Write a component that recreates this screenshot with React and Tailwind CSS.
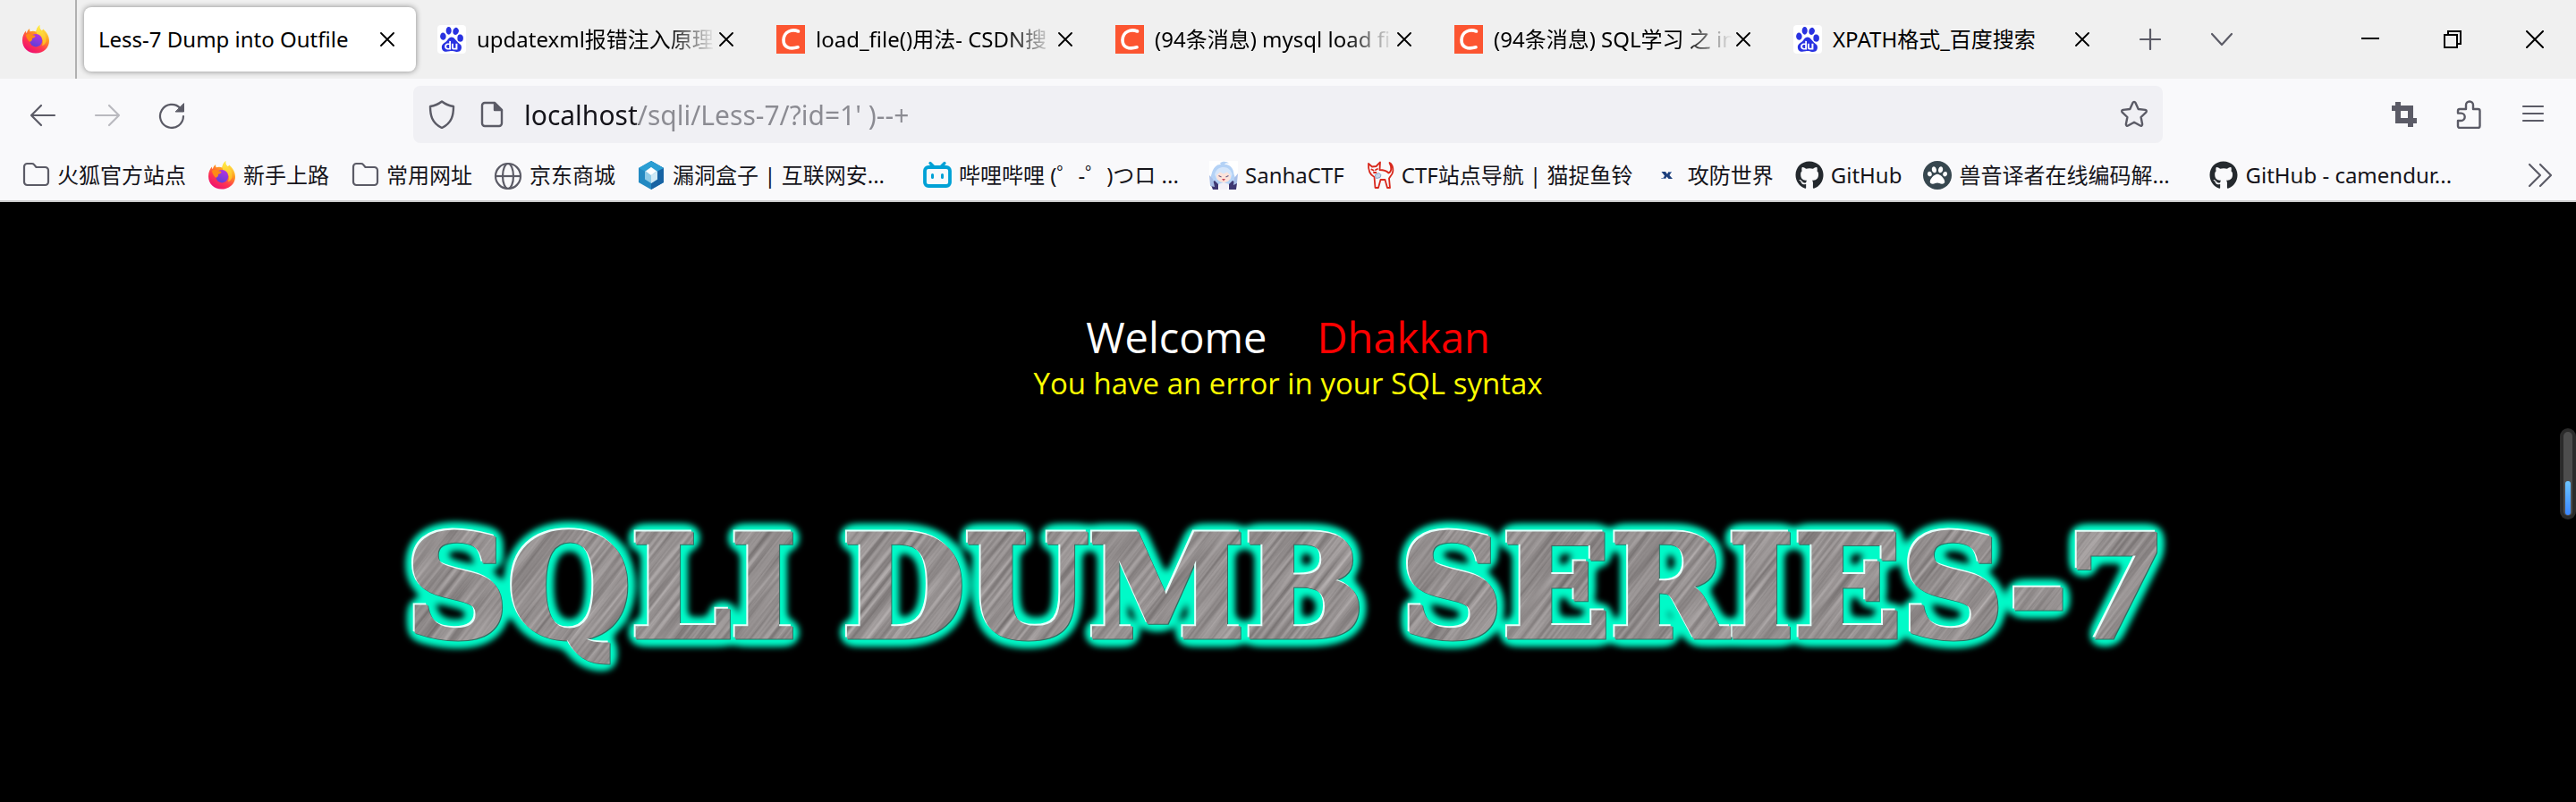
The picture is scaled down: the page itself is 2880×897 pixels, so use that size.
import React from "react";
import { FaGithub, FaPaw } from "react-icons/fa";
import { SiBaidu } from "react-icons/si";

function FirefoxIcon() {
  return (
    <svg viewBox="0 0 32 32" className="size-8" aria-hidden="true">
      <defs>
        <linearGradient id="fx-body" x1="0.8" y1="0" x2="0.2" y2="1">
          <stop offset="0.05" stopColor="#fff44f" />
          <stop offset="0.35" stopColor="#ff9a1f" />
          <stop offset="0.65" stopColor="#ff3750" />
          <stop offset="1" stopColor="#eb0878" />
        </linearGradient>
        <linearGradient id="fx-globe" x1="0.7" y1="0" x2="0.3" y2="1">
          <stop offset="0" stopColor="#b833e1" />
          <stop offset="1" stopColor="#5b3fd6" />
        </linearGradient>
        <linearGradient id="fx-flame" x1="0.5" y1="0" x2="0.5" y2="1">
          <stop offset="0" stopColor="#fff04a" />
          <stop offset="1" stopColor="#ffb21f" />
        </linearGradient>
      </defs>
      <path d="M20.5 0c-.8 3 .2 4.500 2.200 6.200 0 0 1-.3 1.600-1.700 3.500 2.800 6.700 7.500 6.700 13C31 25.500 24.600 31.500 16 31.500S1 25.500 1 17.200c0-4.700 1.800-8.500 3.900-10.700 0 1 .3 2 .9 2.700.7-3 2.200-4.600 3.400-5.200-.3 1.300 0 2.500.6 3.300 2-.7 4.500-.8 6.600.2C16.800 4.500 18 1.500 20.500 0z" fill="url(#fx-body)" />
      <path d="M20.500 0c-.8 3 .2 4.500 2.200 6.200 3.500 3 5.500 7 4.800 12.300-1 3-3.500 4.500-4.500 4.500 2.500-6-.5-11-5.500-12.500l-1.100-3C16.800 4.500 18 1.500 20.500 0z" fill="url(#fx-flame)" />
      <ellipse cx="16.200" cy="17.200" rx="7" ry="7.200" fill="url(#fx-globe)" />
      <path d="M4.900 11c2.600-1.600 5.200-1.500 7 .2 1.400 0 3 .2 3.700 1-.4 1.500-1.800 2.300-3.600 2.600.6 1.800-.8 3.400-2.800 4C7.500 17.500 5.500 14.500 4.900 11z" fill="#ff8a16" />
    </svg>
  );
}

function BaiduIcon() {
  return (
    <span className="flex size-8 items-center justify-center rounded-sm bg-white">
      <SiBaidu className="size-7 text-[#2932e1]" aria-hidden="true" />
    </span>
  );
}

function CsdnIcon() {
  return (
    <svg viewBox="0 0 32 32" className="size-8" aria-hidden="true">
      <rect width="32" height="32" fill="#fc5531" />
      <path d="M24.500 7C17 4 8.500 7.500 8 16.500c-.3 8.500 7 11 16 8.300" fill="none" stroke="#fff" strokeWidth="3.600" strokeLinecap="round" />
    </svg>
  );
}

function FolderIcon() {
  return (
    <svg viewBox="0 0 32 32" className="size-8 text-[#5b5b66]" fill="none" stroke="currentColor" strokeWidth="2.200" strokeLinejoin="round" aria-hidden="true">
      <path d="M3 6.500A3.500 3.500 0 0 1 6.500 3h5.200c1 0 1.800.4 2.400 1.100L16.500 7h10A3.500 3.500 0 0 1 30 10.500v13a3.500 3.500 0 0 1-3.500 3.500h-20A3.500 3.500 0 0 1 3 23.500z" />
    </svg>
  );
}

function GlobeIcon() {
  return (
    <svg viewBox="0 0 32 32" className="size-8 text-[#5b5b66]" fill="none" stroke="currentColor" strokeWidth="2.200" aria-hidden="true">
      <circle cx="16" cy="17" r="14" />
      <ellipse cx="16" cy="17" rx="6" ry="14" />
      <path d="M2 17h28" />
    </svg>
  );
}

function HexIcon() {
  return (
    <svg viewBox="0 0 32 32" className="size-8" aria-hidden="true">
      <path d="M16 0l14 8v16l-14 8L2 24V8z" fill="#2289c2" />
      <path d="M16 0l14 8v16l-14 8z" fill="#1763a3" />
      <path d="M16 0l14 8-7 3.500-7-4-7 4L2 8z" fill="#2b9fd4" />
      <path d="M16 7l7 4.500v9L16 25l-7-4.500v-9z" fill="#8fcbe8" />
      <path d="M16 7l6 4.500L16 16l-6-4.500z" fill="#fff" />
      <path d="M16 16l7-4.500v9L16 25z" fill="#cfe9f5" />
    </svg>
  );
}

function BilibiliIcon() {
  return (
    <svg viewBox="0 0 32 32" className="size-8" fill="none" stroke="#00a1d6" strokeLinecap="round" aria-hidden="true">
      <path d="M8 2.500l4 4M24 2.500l-4 4" strokeWidth="3.200" />
      <rect x="2" y="7" width="28" height="21" rx="4" strokeWidth="3.800" />
      <path d="M10.500 15.500v3M21.500 15.500v3" strokeWidth="3" />
    </svg>
  );
}

function AnimeIcon() {
  return (
    <svg viewBox="0 0 32 32" className="size-8" aria-hidden="true">
      <rect width="32" height="32" fill="#fff" />
      <path d="M12 2.500c2-2.500 8-2.500 10 .5-2-.8-4-.6-5 .8 7 .5 10 5 10.500 11l2.500 7-2.500 5H4L1 20l2-7C5 7 8.500 3.500 13 4z" fill="#b4d2f6" />
      <path d="M6 15c2-6 5-8 10-8s8 3 9.500 8l-2 6h-15z" fill="#d5e6fb" />
      <path d="M8 16l4-3.500 4 2 4-2 4 4c0 5-3.500 7.500-8 7.500s-8-3-8-8z" fill="#fde3da" />
      <path d="M10.500 16.500l3 1.500M21.500 16.500l-3 1.500" stroke="#6a5f8a" strokeWidth="1.200" />
      <path d="M14 20h4l-2 2.500z" fill="#c9485c" />
      <path d="M1 25l5-3 4 4v6H4zM31 25l-5-3-4 4v6h8z" fill="#3f3873" />
      <path d="M10 26l6-2 6 2-2 6h-8z" fill="#f3f0f7" />
      <path d="M0 16l4 4 2 9-5-1zM32 14l-4 5-1 8 4-2z" fill="#a9bfe8" />
    </svg>
  );
}

function CatIcon() {
  return (
    <svg viewBox="0 0 32 32" className="size-8" fill="none" stroke="#d8281c" strokeWidth="1.800" strokeLinejoin="round" strokeLinecap="round" aria-hidden="true">
      <path d="M3 3l4 3.500L11.500 6 16 1.500 15.500 10c5.500 0 8 1.500 10 3.500 3-1 4-6 1-11.500 4 2 5.500 10 1.500 14.500L26 19.500 27 30h-3l-2.500-9h-5L14 30h-3.500L9.500 18C4.500 15.500 2.500 11 3 3z" />
      <path d="M6.500 9.500l2 1M13 9l-2 1M9 13h2.500" />
      <path d="M10.500 15.500l4-2 2.500 2-1 3-4 1z" fill="#c6d6ea" stroke="#8ba6c9" strokeWidth="1" />
    </svg>
  );
}

function XctfIcon() {
  return (
    <svg viewBox="0 0 32 32" className="size-8" aria-hidden="true">
      <path d="M10.500 12h4.500l2 2.800 1.500-2.800H22l-2.500 4 3.500 4h-4.500l-2-2.500-1.500 2.500H10l3-1.500 1-2z" fill="#1c3f7c" />
      <path d="M10.500 19.500h4M18 12.500h4" stroke="#6f8bb8" strokeWidth="1" />
    </svg>
  );
}

function PawIcon() {
  return (
    <span className="flex size-8 items-center justify-center rounded-full bg-[#37474f]">
      <FaPaw className="size-[22px] text-white" aria-hidden="true" />
    </span>
  );
}

function GithubIcon() {
  return <FaGithub className="size-8 text-[#24292e]" aria-hidden="true" />;
}

function CloseIcon() {
  return (
    <svg viewBox="0 0 16 16" className="size-4" fill="none" stroke="currentColor" strokeWidth="1.800" strokeLinecap="round" aria-hidden="true">
      <path d="M1 1l14 14M15 1L1 15" />
    </svg>
  );
}

const tabs = [
  { title: "Less-7 Dump into Outfile", active: true },
  { title: "updatexml报错注入原理", icon: <BaiduIcon />, fade: true },
  { title: "load_file()用法- CSDN搜", icon: <CsdnIcon />, fade: true },
  { title: "(94条消息) mysql load fi", icon: <CsdnIcon />, fade: true },
  { title: "(94条消息) SQL学习 之 in", icon: <CsdnIcon />, fade: true },
  { title: "XPATH格式_百度搜索", icon: <BaiduIcon /> },
];

const bookmarks = [
  { title: "火狐官方站点", icon: <FolderIcon /> },
  { title: "新手上路", icon: <FirefoxIcon /> },
  { title: "常用网址", icon: <FolderIcon /> },
  { title: "京东商城", icon: <GlobeIcon /> },
  { title: "漏洞盒子 | 互联网安...", icon: <HexIcon />, long: true },
  { title: "哔哩哔哩 (゜-゜)つロ ...", icon: <BilibiliIcon />, long: true },
  { title: "SanhaCTF", icon: <AnimeIcon /> },
  { title: "CTF站点导航 | 猫捉鱼铃", icon: <CatIcon />, long: true },
  { title: "攻防世界", icon: <XctfIcon /> },
  { title: "GitHub", icon: <GithubIcon /> },
  { title: "兽音译者在线编码解...", icon: <PawIcon />, long: true },
  { title: "GitHub - camendur...", icon: <GithubIcon />, long: true },
];

function Tab({ title, icon, active, fade }) {
  return (
    <div className="w-[379px] px-1 py-2">
      <div
        className={
          active
            ? "flex h-full items-center rounded-lg bg-white pl-4 pr-6 shadow-[0_0_6px_rgba(0,0,0,0.45)]"
            : "flex h-full items-center rounded-lg pl-4 pr-6"
        }
      >
        {icon && <span className="mr-3 shrink-0">{icon}</span>}
        <a
          href="#page"
          role="tab"
          aria-selected={Boolean(active)}
          className={
            fade
              ? "min-w-0 flex-1 whitespace-nowrap mask-r-from-80% mask-r-to-100%"
              : "min-w-0 flex-1 whitespace-nowrap"
          }
        >
          {title}
        </a>
        <button type="button" aria-label="Close tab" className="ml-1 flex h-8 w-4 shrink-0 items-center justify-center">
          <CloseIcon />
        </button>
      </div>
    </div>
  );
}

function TabBar() {
  return (
    <header className="flex h-[88px] items-stretch bg-[#f0f0f0] text-2xl text-black">
      <div className="flex w-[86px] items-center border-r-2 border-[#b0b0b0] pl-6">
        <FirefoxIcon />
      </div>
      <div role="tablist" className="ml-1 flex">
        {tabs.map((t) => (
          <Tab key={t.title} {...t} />
        ))}
      </div>
      <div className="flex items-center gap-10 pl-5 text-[#5b5b66]">
        <button type="button" aria-label="New tab" className="flex size-10 items-center justify-center">
          <svg viewBox="0 0 24 24" className="size-6" stroke="currentColor" strokeWidth="2.200" strokeLinecap="round">
            <path d="M12 1v22M1 12h22" />
          </svg>
        </button>
        <button type="button" aria-label="List all tabs" className="flex size-10 items-center justify-center">
          <svg viewBox="0 0 24 24" className="size-6" fill="none" stroke="currentColor" strokeWidth="2.200" strokeLinecap="round" strokeLinejoin="round">
            <path d="M1 6l11 12L23 6" />
          </svg>
        </button>
      </div>
      <div className="ml-auto flex items-center">
        <button type="button" aria-label="Minimize" className="flex w-[92px] items-center justify-center">
          <svg viewBox="0 0 20 20" className="size-5" stroke="currentColor" strokeWidth="2">
            <path d="M0 9h20" />
          </svg>
        </button>
        <button type="button" aria-label="Restore" className="flex w-[92px] items-center justify-center">
          <svg viewBox="0 0 20 20" className="size-5" fill="none" stroke="currentColor" strokeWidth="2">
            <path d="M1 5h14v14H1zM5 5V1h14v14h-4" />
          </svg>
        </button>
        <button type="button" aria-label="Close" className="flex w-[92px] items-center justify-center">
          <svg viewBox="0 0 20 20" className="size-5" stroke="currentColor" strokeWidth="2" strokeLinecap="round">
            <path d="M1 1l18 18M19 1L1 19" />
          </svg>
        </button>
      </div>
    </header>
  );
}

function NavBar() {
  return (
    <nav className="flex h-20 items-center bg-[#f9f9fb] text-[#5b5b66]">
      <div className="flex w-[462px] items-center gap-10 pl-8">
        <button type="button" aria-label="Back">
          <svg viewBox="0 0 32 32" className="size-8" fill="none" stroke="currentColor" strokeWidth="2.200" strokeLinecap="round" strokeLinejoin="round">
            <path d="M29 17H3M14 6L3 17l11 11" />
          </svg>
        </button>
        <button type="button" aria-label="Forward" disabled className="opacity-40">
          <svg viewBox="0 0 32 32" className="size-8" fill="none" stroke="currentColor" strokeWidth="2.200" strokeLinecap="round" strokeLinejoin="round">
            <path d="M3 17h26M18 6l11 11-11 11" />
          </svg>
        </button>
        <button type="button" aria-label="Reload">
          <svg viewBox="0 0 32 32" className="size-8" fill="none" stroke="currentColor" strokeWidth="2.200" strokeLinecap="round" strokeLinejoin="round">
            <path d="M29 18A13 13 0 1 1 25.500 9" />
            <path d="M29.500 4v9h-9z" fill="currentColor" strokeWidth="1" />
          </svg>
        </button>
      </div>
      <form className="flex h-16 flex-1 items-center rounded-lg bg-[#f0f0f4] pl-4 pr-4" onSubmit={(e) => e.preventDefault()}>
        <svg viewBox="0 0 32 32" className="size-8" fill="none" stroke="currentColor" strokeWidth="2.400" strokeLinejoin="round" aria-hidden="true">
          <path d="M16 1.500c3.800 3 8.200 4.700 13 5.500 0 9.500-1.500 18.500-13 24C4.500 25.500 3 16.500 3 7c4.800-.8 9.200-2.500 13-5.500z" />
        </svg>
        <svg viewBox="0 0 32 32" className="ml-6 size-8" fill="none" stroke="currentColor" strokeWidth="2.400" strokeLinejoin="round" aria-hidden="true">
          <path d="M8 3h11l8 8v15a3 3 0 0 1-3 3H8a3 3 0 0 1-3-3V6a3 3 0 0 1 3-3z" />
          <path d="M19 3v8h8z" fill="currentColor" />
        </svg>
        <input
          type="text"
          aria-label="Address"
          defaultValue="localhost/sqli/Less-7/?id=1' )--+"
          className="ml-5 h-12 min-w-0 flex-1 bg-[linear-gradient(90deg,#15141a_128px,#8b8b92_128px)] bg-clip-text text-3xl text-transparent outline-none"
        />
        <button type="button" aria-label="Bookmark this page">
          <svg viewBox="0 0 32 32" className="size-8" fill="none" stroke="currentColor" strokeWidth="2.400" strokeLinejoin="round">
            <path d="M14.600 2.800c.6-1.200 2.200-1.200 2.800 0l3.300 7.200 7.700.9c1.400.2 1.900 1.800.9 2.700l-5.700 5.400 1.500 7.800c.3 1.400-1.100 2.300-2.300 1.700L16 24.700l-6.800 3.800c-1.200.6-2.600-.3-2.300-1.700l1.500-7.800-5.700-5.400c-1-.9-.5-2.500.9-2.700l7.700-.9z" />
          </svg>
        </button>
      </form>
      <div className="flex w-[462px] items-center justify-end gap-10 pr-8">
        <button type="button" aria-label="Screenshot">
          <svg viewBox="0 0 32 32" className="size-8" fill="none" stroke="currentColor" strokeWidth="6">
            <path d="M9 2v21h21M2 9h21v21" />
          </svg>
        </button>
        <button type="button" aria-label="Extensions">
          <svg viewBox="0 0 32 32" className="size-8" fill="none" stroke="currentColor" strokeWidth="2.400" strokeLinejoin="round">
            <path d="M6 10h7V5.500a4 4 0 0 1 8 0V10h5.500a2 2 0 0 1 2 2v17a2 2 0 0 1-2 2H6a2 2 0 0 1-2-2v-6h3.500a4.200 4.200 0 0 0 0-8.400H4V12a2 2 0 0 1 2-2z" />
          </svg>
        </button>
        <button type="button" aria-label="Menu">
          <svg viewBox="0 0 32 32" className="size-8" stroke="currentColor" strokeWidth="2.200" strokeLinecap="round">
            <path d="M5 7h22M5 15h22M5 23h22" />
          </svg>
        </button>
      </div>
    </nav>
  );
}

function BookmarkBar() {
  return (
    <div className="flex h-[58px] items-center border-b-2 border-[#cccccc] bg-[#f9f9fb] pl-6 pr-6 text-2xl text-[#15141a]">
      <ul className="flex flex-1 items-center gap-6">
        {bookmarks.map((b) => (
          <li key={b.title}>
            <a href="#page" className="flex items-center gap-2">
              <span className="shrink-0">{b.icon}</span>
              <span className={b.long ? "w-64 whitespace-nowrap" : "whitespace-nowrap"}>{b.title}</span>
            </a>
          </li>
        ))}
      </ul>
      <button type="button" aria-label="More bookmarks" className="text-[#5b5b66]">
        <svg viewBox="0 0 32 32" className="size-8" fill="none" stroke="currentColor" strokeWidth="2.200" strokeLinecap="round" strokeLinejoin="round">
          <path d="M4 4l12 12L4 28M16 4l12 12-12 12" />
        </svg>
      </button>
    </div>
  );
}

function Banner() {
  return (
    <svg viewBox="0 0 2040 220" className="w-[2040px] max-w-full" role="img" aria-label="SQLI DUMB SERIES-7">
      <defs>
        <filter id="grain" filterUnits="userSpaceOnUse" x="0" y="0" width="700" height="700" colorInterpolationFilters="sRGB">
          <feTurbulence type="fractalNoise" baseFrequency="0.2 0.005" numOctaves="3" seed="4" stitchTiles="stitch" />
          <feColorMatrix type="matrix" values="0.36 0 0 0 0.4  0.36 0 0 0 0.38  0.36 0 0 0 0.38  0 0 0 0 1" />
        </filter>
        <pattern id="brushed" width="700" height="700" patternUnits="userSpaceOnUse" patternTransform="rotate(38)">
          <rect width="700" height="700" filter="url(#grain)" />
        </pattern>
        <filter id="glow" filterUnits="userSpaceOnUse" x="0" y="0" width="2040" height="220" colorInterpolationFilters="sRGB">
          <feGaussianBlur in="SourceAlpha" stdDeviation="7" result="soft" />
          <feComponentTransfer in="soft" result="fat">
            <feFuncA type="linear" slope="12" intercept="-0.6" />
          </feComponentTransfer>
          <feGaussianBlur in="fat" stdDeviation="3" result="halo" />
          <feFlood floodColor="#00fac8" />
          <feComposite in2="halo" operator="in" result="aura" />
          <feOffset in="SourceAlpha" dx="-2" dy="-2" result="up" />
          <feFlood floodColor="#e6fffa" />
          <feComposite in2="up" operator="in" result="light" />
          <feOffset in="SourceAlpha" dx="1" dy="1" result="down" />
          <feFlood floodColor="#2f6f62" />
          <feComposite in2="down" operator="in" result="dark" />
          <feMerge>
            <feMergeNode in="aura" />
            <feMergeNode in="dark" />
            <feMergeNode in="light" />
            <feMergeNode in="SourceGraphic" />
          </feMerge>
        </filter>
      </defs>
      <g filter="url(#glow)" fill="url(#brushed)" stroke="url(#brushed)" strokeWidth="5" strokeLinejoin="miter" className="font-['DejaVu_Serif',serif] text-[158px] font-bold">
        <text x="34" y="158">SQLI</text>
        <text x="522" y="158">DUMB</text>
        <text x="1146" y="158">SERIES-7</text>
      </g>
    </svg>
  );
}

export default function App() {
  return (
    <div className="flex min-h-screen flex-col bg-black font-['Noto_Sans','Noto_Sans_CJK_SC',sans-serif]">
      <TabBar />
      <NavBar />
      <BookmarkBar />
      <main id="page" className="relative flex flex-1 flex-col items-center bg-black pt-[119px] text-center font-['Open_Sans',sans-serif]">
        <p className="flex gap-14 text-[47px] leading-[64px] text-white">
          <span>Welcome</span>
          <span className="text-[#ff0000]">Dhakkan</span>
        </p>
        <p className="text-[33px] leading-10 text-[#ffff00]">You have an error in your SQL syntax</p>
        <h1 className="mt-[105px] flex w-full justify-center">
          <Banner />
        </h1>
        <div className="absolute right-0 top-[253px] flex h-[102px] w-[18px] rounded-full bg-[#2b2b2b] p-1" aria-hidden="true">
          <div className="flex w-full items-end rounded-full bg-[#4d4d4d] px-[2px] pb-px">
            <div className="h-[38px] w-full rounded-full bg-linear-to-b from-[#6cc4ff] to-[#3b86ff]" />
          </div>
        </div>
      </main>
    </div>
  );
}
